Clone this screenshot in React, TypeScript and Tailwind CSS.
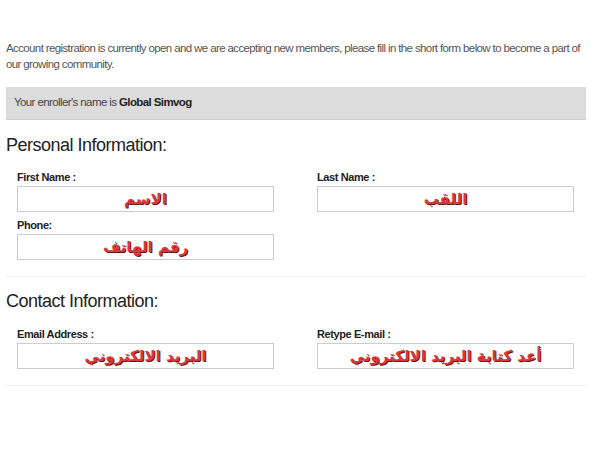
const arabic = "font-['DejaVu_Sans',sans-serif] font-bold text-[15px] leading-none text-[#d83a3a] [text-shadow:1px_1px_0_#6b1212]";

const Field = ({label, value, className = ""}: {label: string; value: string; className?: string}) => (
    <div className={className}>
        <div className="text-[11px] leading-[14px] font-bold tracking-[-0.4px] text-[#222]">{label}</div>
        <div className="mt-[2px] w-[257px] h-[26px] border border-[#ccc] bg-white flex items-center justify-center">
            <span dir="rtl" className={arabic}>{value}</span>
        </div>
    </div>
);

export default function App() {
    return (
        <div className="w-[600px] h-[450px] bg-white font-['Liberation_Sans',Arial,sans-serif] text-[#333]">
            <div className="pl-[6px] pr-[14px] pt-[40px]">
                <p className="text-[11.5px] leading-[16px] tracking-[-0.62px] text-[#555]">
                    Account registration is currently open and we are accepting new members, please fill in the short form below to become a part of our growing community.
                </p>
                <div className="mt-[15px] h-[33px] bg-[#dcdcdc] border-b border-[#d0d0d0] flex items-center pl-[8px] text-[11.5px] tracking-[-0.6px] text-[#444]">
                    Your enroller's name is&nbsp;<b className="text-[#222]">Global Simvog</b>
                </div>

                <h2 className="mt-[15px] text-[18px] leading-[20px] tracking-[-0.5px] text-[#222]">Personal Information:</h2>
                <div className="mt-[15px] pl-[11px] grid grid-cols-[300px_300px] gap-y-[6px]">
                    <Field label="First Name :" value="الاسم" />
                    <Field label="Last Name :" value="اللقب" />
                    <Field label="Phone:" value="رقم الهاتف" />
                </div>
                <div className="mt-[16px] border-t border-[#eee]" />

                <h2 className="mt-[14px] text-[18px] leading-[20px] tracking-[-0.5px] text-[#222]">Contact Information:</h2>
                <div className="mt-[16px] pl-[11px] grid grid-cols-[300px_300px]">
                    <Field label="Email Address :" value="البريد الالكتروني" />
                    <Field label="Retype E-mail :" value="أعد كتابة البريد الالكتروني" />
                </div>
                <div className="mt-[16px] border-t border-[#eee]" />
            </div>
        </div>
    );
}
